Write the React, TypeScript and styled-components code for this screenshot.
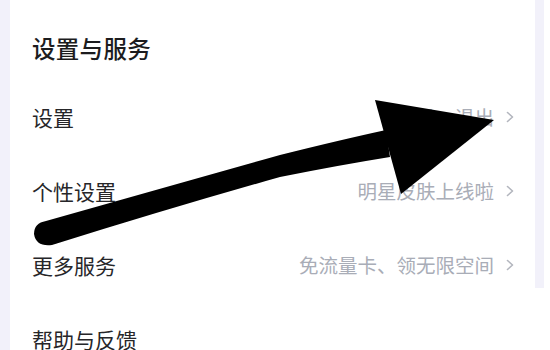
import React from "react";
import styled, { createGlobalStyle } from "styled-components";

const Global = createGlobalStyle`
  html, body { margin: 0; padding: 0; background: #ffffff; }
  body { font-family: "Noto Sans CJK SC", "Noto Sans", sans-serif; }
`;

const Page = styled.div`
  position: relative;
  width: 550px;
  height: 350px;
  overflow: hidden;
  display: flex;
  align-items: flex-start;
  background: #ffffff;
`;

const Gutter = styled.div<{ $h: number; $w: number }>`
  width: ${(p) => p.$w}px;
  height: ${(p) => p.$h}px;
  background: #f2f1fa;
  flex: none;
`;

const Card = styled.div`
  width: 525px;
  height: 350px;
  flex: none;
  background: #ffffff;
  border-radius: 12px 12px 0 0;
  box-sizing: border-box;
  padding: 32px 21px 0 22px;
  display: flex;
  flex-direction: column;
  overflow: hidden;
`;

const Title = styled.div`
  flex: none;
  font-size: 23.5px;
  line-height: 32px;
  height: 32px;
  font-weight: 500;
  color: #1c1c1e;
  margin-bottom: 16px;
  letter-spacing: 0.3px;
`;

const Row = styled.div`
  flex: none;
  height: 74px;
  display: flex;
  align-items: center;
  justify-content: space-between;
`;

const Label = styled.div`
  font-size: 21px;
  line-height: 28px;
  color: #262629;
`;

const Right = styled.div`
  display: flex;
  align-items: center;
  gap: 12px;
`;

const Sub = styled.div`
  font-size: 19.5px;
  line-height: 26px;
  color: #a9adb7;
`;

const Chevron = styled.svg`
  width: 8px;
  height: 12px;
  flex: none;
`;

const Arrow = styled.svg`
  position: absolute;
  left: 0;
  top: 0;
  width: 550px;
  height: 350px;
  pointer-events: none;
`;

const rows = [
  { label: "设置", sub: "账号、退出" },
  { label: "个性设置", sub: "明星皮肤上线啦" },
  { label: "更多服务", sub: "免流量卡、领无限空间" },
  { label: "帮助与反馈", sub: "" },
];

function ChevronIcon() {
  return (
    <Chevron viewBox="0 0 8 12">
      <path d="M1.5 1.5 L6.5 6 L1.5 10.5" fill="none" stroke="#b3b6be" strokeWidth="1.6" strokeLinecap="round" strokeLinejoin="round" />
    </Chevron>
  );
}

export default function App() {
  return (
    <>
      <Global />
      <Page>
        <Gutter $w={10} $h={350} />
        <Card>
          <Title>设置与服务</Title>
          {rows.map((r) => (
            <Row key={r.label}>
              <Label>{r.label}</Label>
              {r.sub && (
                <Right>
                  <Sub>{r.sub}</Sub>
                  <ChevronIcon />
                </Right>
              )}
            </Row>
          ))}
        </Card>
        <Gutter $w={9} $h={288} />
        <Arrow viewBox="0 0 550 350">
          <path
            d="M46 221 Q170 186 280 155 Q340 140 386 130 L390 157 Q340 165 280 177 Q170 208 52 245 Q36 247 34 234 Q34 223 46 221 Z"
            fill="#000"
          />
          <path d="M375 100 L494 120 L401 194 Z" fill="#000" />
        </Arrow>
      </Page>
    </>
  );
}
